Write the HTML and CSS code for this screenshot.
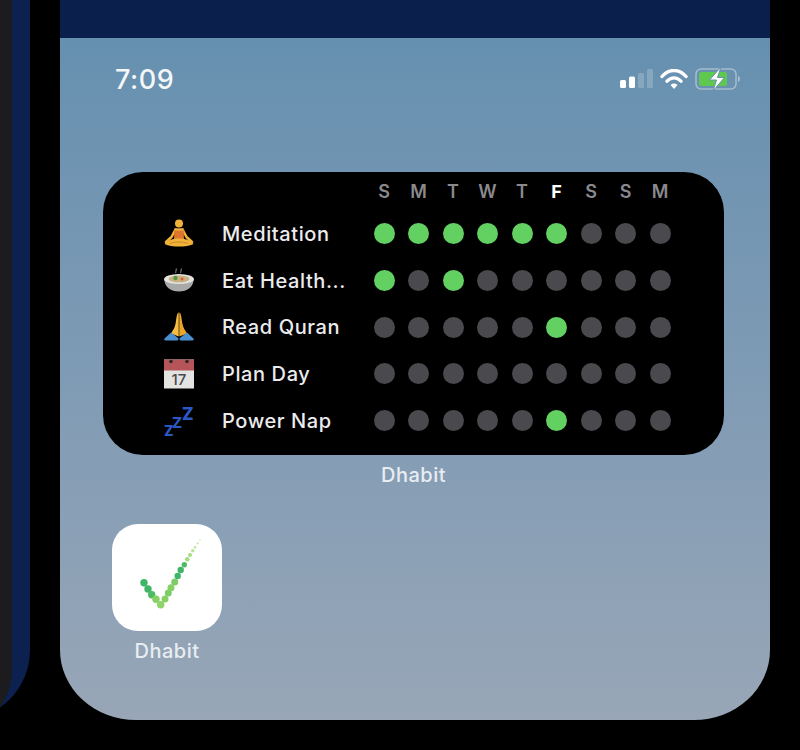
FILE: index.html
```html
<!DOCTYPE html>
<html lang="en">
<head>
    <meta charset="UTF-8">
    <meta name="viewport" content="width=device-width, initial-scale=1.0">
    <title>Dhabit</title>
    <link rel="stylesheet" href="styles.css">
</head>
<body>
    <div class="stage">
        <!-- previous phone, mostly cut off by the window -->
        <div class="side-phone">
            <div class="side-screen"></div>
        </div>

        <div class="phone">
            <div class="top-band"></div>
            <div class="wallpaper">
                <div class="status-bar">
                    <span class="time">7:09</span>
                    <div class="status-icons">
                        <svg class="signal" width="33" height="20" viewBox="0 0 33 20">
                            <rect x="0" y="11" width="6" height="8" rx="1.5" fill="#fff"/>
                            <rect x="9" y="7.5" width="6" height="11.5" rx="1.5" fill="#fff"/>
                            <rect x="18" y="4" width="6" height="15" rx="1.5" fill="#fff" opacity=".2"/>
                            <rect x="27" y="0" width="6" height="19" rx="1.5" fill="#fff" opacity=".2"/>
                        </svg>
                        <svg class="wifi" width="28" height="21" viewBox="0 0 28 21">
                            <path d="M2 7.500C9-.5 19-.5 26 7.500" fill="none" stroke="#fff" stroke-width="3.400" stroke-linecap="round"/>
                            <path d="M7 12.200c4.300-4.500 9.700-4.500 14 0" fill="none" stroke="#fff" stroke-width="3.400" stroke-linecap="round"/>
                            <path d="M10.500 16L14 20l3.500-4c-2.200-1.900-4.800-1.900-7 0z" fill="#fff"/>
                        </svg>
                        <svg class="battery" width="47" height="24" viewBox="0 0 47 24">
                            <rect x="1" y="2" width="40" height="20" rx="5" fill="none" stroke="#fff" stroke-opacity=".4" stroke-width="1.500"/>
                            <rect x="4" y="5" width="28" height="14" rx="2.500" fill="#5fc94f"/>
                            <path d="M43 9c2.500.5 2.500 5.500 0 6z" fill="#fff" opacity=".45"/>
                            <path d="M26 0L14.500 13h7L18 24l11.500-13.500h-7z" fill="#fff" stroke="#6690ae" stroke-width="1"/>
                        </svg>
                    </div>
                </div>

                <div class="widget">
                    <div class="habit-grid">
                        <div class="day-spacer"></div>
                        <span class="day">S</span><span class="day">M</span><span class="day">T</span><span class="day">W</span><span class="day">T</span><span class="day today">F</span><span class="day">S</span><span class="day">S</span><span class="day">M</span>

                        <div class="habit-icon">
                            <svg width="32" height="32" viewBox="0 0 32 32">
                                <circle cx="16" cy="5.500" r="4" fill="#f1b23a"/>
                                <path d="M12.500 11.500L8.500 19 3 24M19.500 11.500L23.500 19 29 24" fill="none" stroke="#f1b23a" stroke-width="2.600" stroke-linecap="round" stroke-linejoin="round"/>
                                <path d="M11.500 10.500h9l.5 10.500H11z" fill="#e0762e"/>
                                <path d="M11.500 10.500h9l-.4 2h-8.200z" fill="#f1b23a"/>
                                <path d="M1.500 26c3.500-4 8.500-5.500 14.500-5.500S27 22 30.500 26c-4 2-9 2.500-14.500 2.500S5.500 28 1.500 26z" fill="#f1b23a"/>
                                <path d="M7 25.500c5.500-2 12.500-2 18 0" fill="none" stroke="#c98a22" stroke-width="1"/>
                            </svg>
                        </div>
                        <div class="habit-name">Meditation</div>
                        <i class="dot on"></i><i class="dot on"></i><i class="dot on"></i><i class="dot on"></i><i class="dot on"></i><i class="dot on"></i><i class="dot"></i><i class="dot"></i><i class="dot"></i>

                        <div class="habit-icon">
                            <svg width="32" height="32" viewBox="0 0 32 32">
                                <path d="M13 8c-1.500-1.500 1.500-2.500 0-4.500M18 8c-1.500-1.500 1.500-2.500 0-4.500" fill="none" stroke="#6a6a6a" stroke-width="1.300"/>
                                <ellipse cx="16" cy="14.500" rx="15" ry="5.500" fill="#e4e4e0"/>
                                <ellipse cx="16" cy="14" rx="10.500" ry="3.400" fill="#c9b184"/>
                                <circle cx="12.500" cy="13" r="2.200" fill="#4d9a45"/>
                                <circle cx="19" cy="14" r="1.500" fill="#d8602e"/>
                                <path d="M1.500 16c1 6 6 10.500 14.500 10.500S29.500 22 30.500 16C24 20 8 20 1.500 16z" fill="#a9a9a7"/>
                            </svg>
                        </div>
                        <div class="habit-name">Eat Health...</div>
                        <i class="dot on"></i><i class="dot"></i><i class="dot on"></i><i class="dot"></i><i class="dot"></i><i class="dot"></i><i class="dot"></i><i class="dot"></i><i class="dot"></i>

                        <div class="habit-icon">
                            <svg width="32" height="32" viewBox="0 0 32 32">
                                <path d="M15.700 1.500C13.500 2.500 13.500 8 12.500 13c-.8 4-2.500 6-4.500 9.500l7.700 3z" fill="#f7bd42"/>
                                <path d="M16.300 1.500c2.200 1 2.200 6.500 3.200 11.500.8 4 2.500 6 4.500 9.500l-7.700 3z" fill="#eba728"/>
                                <path d="M8 21.500L1.500 27.500c-.6 1 0 2 1 2h11.500c1.200 0 1.700-1 1.400-2.200z" fill="#4a8fd0"/>
                                <path d="M24 21.500l6.500 6c.6 1 0 2-1 2H18c-1.200 0-1.700-1-1.400-2.200z" fill="#4a8fd0"/>
                            </svg>
                        </div>
                        <div class="habit-name">Read Quran</div>
                        <i class="dot"></i><i class="dot"></i><i class="dot"></i><i class="dot"></i><i class="dot"></i><i class="dot on"></i><i class="dot"></i><i class="dot"></i><i class="dot"></i>

                        <div class="habit-icon">
                            <svg width="32" height="32" viewBox="0 0 32 32">
                                <rect x="1" y="1.500" width="30" height="29" fill="#e3e3e1"/>
                                <rect x="1" y="1.500" width="30" height="11" fill="#b5555a"/>
                                <circle cx="8" cy="3.500" r="1.800" fill="#2a2a2a"/>
                                <circle cx="24" cy="3.500" r="1.800" fill="#2a2a2a"/>
                                <text x="16" y="27" text-anchor="middle" class="cal-day">17</text>
                            </svg>
                        </div>
                        <div class="habit-name">Plan Day</div>
                        <i class="dot"></i><i class="dot"></i><i class="dot"></i><i class="dot"></i><i class="dot"></i><i class="dot"></i><i class="dot"></i><i class="dot"></i><i class="dot"></i>

                        <div class="habit-icon">
                            <svg class="zzz-icon" width="32" height="32" viewBox="0 0 32 32">
                                <text x="1" y="31" class="zzz zzz-s">Z</text>
                                <text x="9" y="23" class="zzz zzz-m">Z</text>
                                <text x="19" y="15" class="zzz zzz-l">Z</text>
                            </svg>
                        </div>
                        <div class="habit-name">Power Nap</div>
                        <i class="dot"></i><i class="dot"></i><i class="dot"></i><i class="dot"></i><i class="dot"></i><i class="dot on"></i><i class="dot"></i><i class="dot"></i><i class="dot"></i>
                    </div>
                </div>
                <div class="widget-label">Dhabit</div>

                <div class="app">
                    <div class="app-icon">
                        <svg width="110" height="107" viewBox="112 524 110 107">
                            <circle cx="144" cy="582.700" r="3.700" fill="#3fb568"/>
                            <circle cx="148" cy="589" r="3.700" fill="#3fb568"/>
                            <circle cx="151.700" cy="594.700" r="3.700" fill="#4dbb64"/>
                            <circle cx="156" cy="599.300" r="3.700" fill="#86d066"/>
                            <circle cx="160.700" cy="604.700" r="3.700" fill="#8fd468"/>
                            <circle cx="165" cy="599" r="3.500" fill="#86d066"/>
                            <circle cx="168.300" cy="593" r="3.500" fill="#7ccd66"/>
                            <circle cx="171" cy="587.700" r="3.500" fill="#86d066"/>
                            <circle cx="174.700" cy="582" r="3.500" fill="#7ccd66"/>
                            <circle cx="177.700" cy="576" r="3.200" fill="#3fb568"/>
                            <circle cx="180.700" cy="570" r="3.200" fill="#3fb568"/>
                            <circle cx="184.300" cy="564.700" r="2.700" fill="#4dbb64"/>
                            <circle cx="187.300" cy="559.300" r="2.300" fill="#a5dc80"/>
                            <circle cx="190" cy="555" r="2" fill="#a5dc80"/>
                            <circle cx="192.700" cy="550.700" r="1.700" fill="#b5e394"/>
                            <circle cx="195" cy="547.300" r="1.400" fill="#c2e8a6"/>
                            <circle cx="197.700" cy="543.300" r="1.200" fill="#d2eebf"/>
                            <circle cx="200" cy="540" r="1" fill="#dff3d0"/>
                        </svg>
                    </div>
                    <div class="app-label">Dhabit</div>
                </div>
            </div>
        </div>
    </div>
</body>
</html>
```
FILE: styles.css
```css
html, body {
    margin: 0;
    height: 100%;
    background: #000;
    overflow: hidden;
}
body {
    font-family: Inter, "Liberation Sans", sans-serif;
    color: #fff;
}
.stage {
    display: flex;
    gap: 30px;
    margin-left: -41px;
    width: 841px;
}
.side-phone {
    flex: 0 0 71px;
    height: 720px;
    background: #0c2150;
    border-radius: 0 0 70px 0;
    overflow: hidden;
}
.side-screen {
    width: 53px;
    height: 729px;
    background: #1c1c1e;
    border-radius: 0 0 53px 0 / 0 0 60px 0;
}
.phone {
    flex: 0 0 710px;
    height: 720px;
    display: flex;
    flex-direction: column;
    border-radius: 0 0 76px 76px / 0 0 70px 70px;
    overflow: hidden;
}
.top-band {
    height: 38px;
    flex: none;
    background: #0a1f4b;
}
.wallpaper {
    flex: 1;
    background: linear-gradient(#6690b0, #7d9ab4 45%, #98a6b7);
    display: flex;
    flex-direction: column;
}
.status-bar {
    display: flex;
    justify-content: space-between;
    align-items: center;
    height: 82px;
    padding: 0 28px 0 55px;
}
.time {
    font-size: 27px;
    font-weight: 500;
    letter-spacing: 0.5px;
    color: #f4f6f8;
}
.status-icons {
    display: flex;
    align-items: center;
    gap: 7px;
}
.widget {
    margin: 52px 46px 0 43px;
    height: 283px;
    background: #000;
    border-radius: 40px;
}
.habit-grid {
    display: grid;
    grid-template-columns: 52px 161.75px repeat(9, 34.5px);
    grid-template-rows: 38.67px repeat(5, 46.67px);
    align-items: center;
    justify-items: center;
    padding-left: 50px;
}
.day-spacer {
    grid-column: span 2;
}
.day {
    font-size: 18px;
    font-weight: 600;
    color: #8a8a8e;
}
.today {
    font-weight: 700;
    color: #fff;
}
.habit-icon {
    display: flex;
    line-height: 0;
}
.habit-name {
    justify-self: start;
    padding-left: 17px;
    font-size: 20px;
    font-weight: 500;
    letter-spacing: 0.6px;
    color: #ececee;
    white-space: nowrap;
}
.dot {
    width: 21px;
    height: 21px;
    border-radius: 50%;
    background: #4a4a4e;
}
.dot.on {
    background: #63d162;
}
.cal-day {
    font-size: 15px;
    font-weight: 500;
    fill: #4a4a4a;
}
.zzz-icon {
    overflow: visible;
}
.zzz {
    font-weight: 800;
    fill: #2a58c4;
}
.zzz-s { font-size: 14px; }
.zzz-m { font-size: 15px; }
.zzz-l { font-size: 17px; }
.widget-label, .app-label {
    font-size: 20px;
    font-weight: 500;
    letter-spacing: 0.5px;
    color: #e8edf2;
    text-align: center;
}
.widget-label {
    margin: 8px 46px 0 43px;
}
.app {
    width: 110px;
    margin: 37px 0 0 52px;
}
.app-icon {
    height: 107px;
    background: #fff;
    border-radius: 26px;
    line-height: 0;
}
.app-label {
    margin-top: 8px;
}
```
